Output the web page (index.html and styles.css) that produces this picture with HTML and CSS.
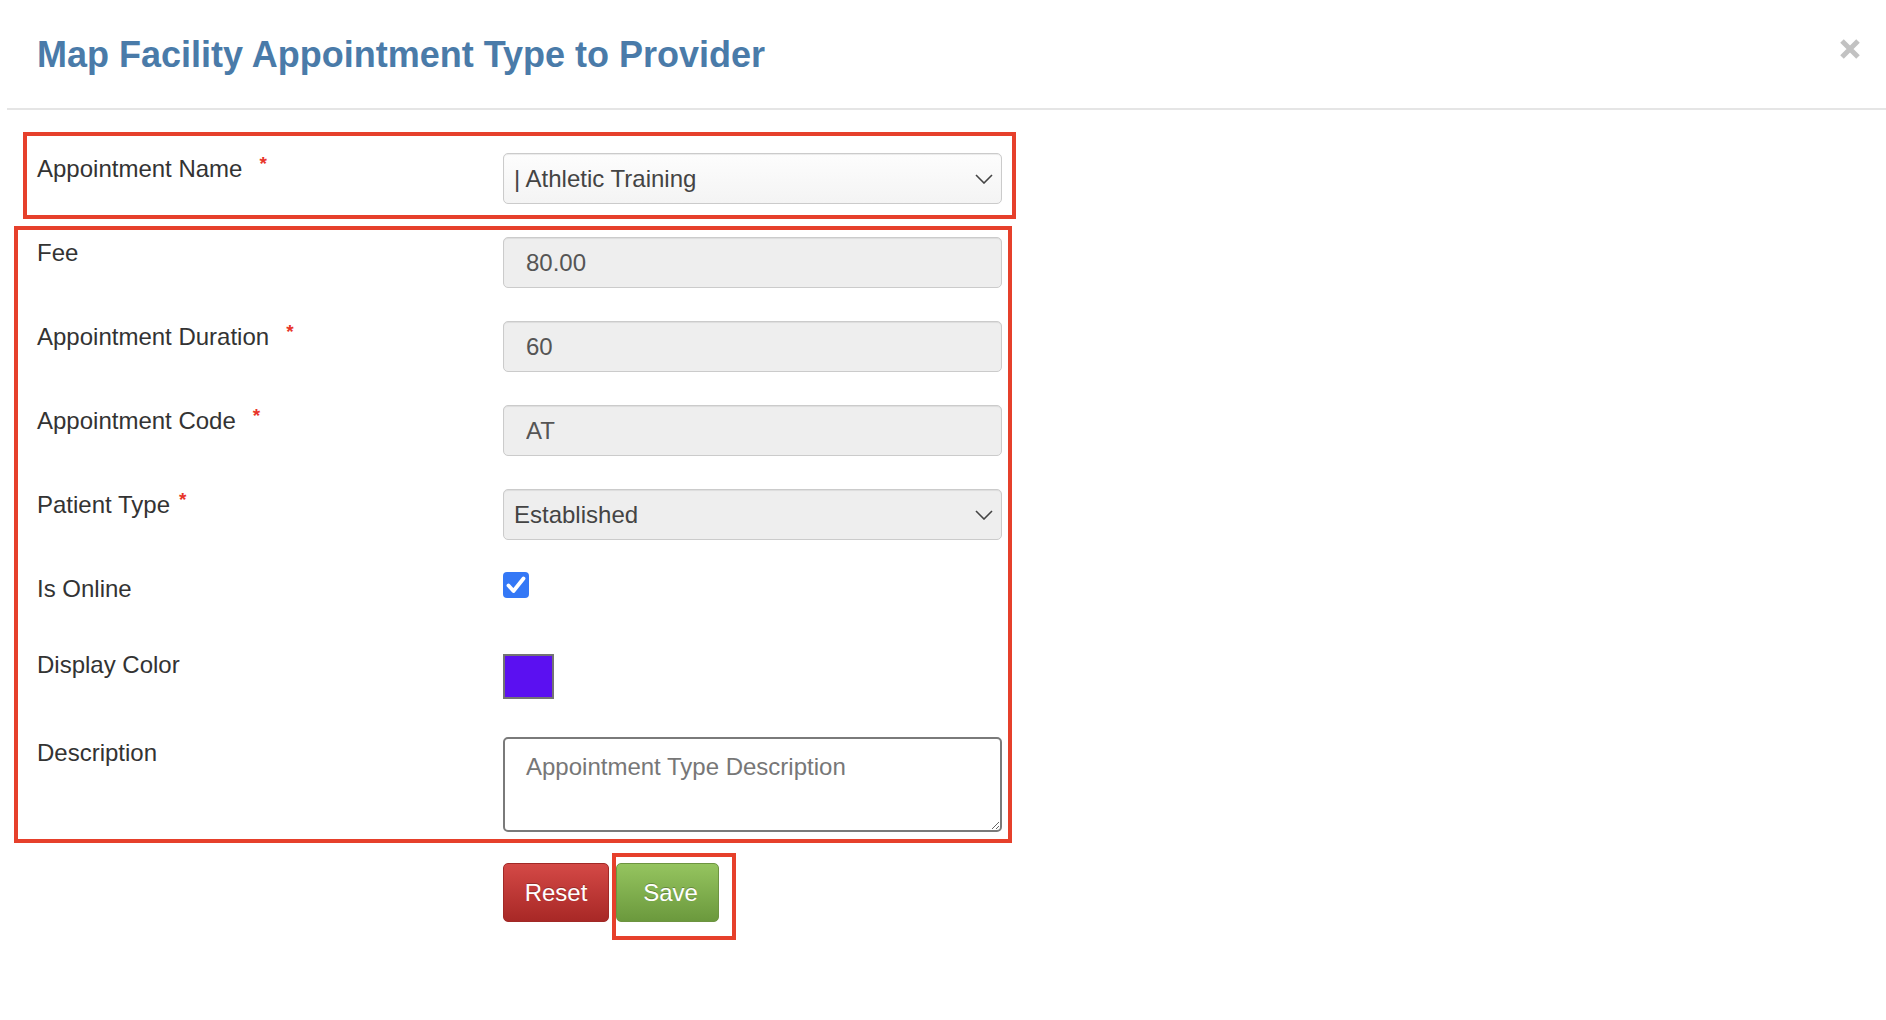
FILE: index.html
```html
<!DOCTYPE html>
<html lang="en">
<head>
<meta charset="utf-8">
<title>Map Facility Appointment Type to Provider</title>
<link rel="stylesheet" href="styles.css">
</head>
<body>
<div class="modal">
  <header class="modal-header">
    <h1 class="modal-title">Map Facility Appointment Type to Provider</h1>
    <button class="close" type="button" aria-label="Close">
      <svg width="22" height="22" viewBox="0 0 22 22"><path d="M3 3 L19 19 M19 3 L3 19" stroke="#c2c2c2" stroke-width="5" stroke-linecap="butt"/></svg>
    </button>
  </header>
  <form class="form">
    <div class="mark mark-name">
      <div class="row">
        <label class="label">Appointment Name<span class="req">*</span></label>
        <div class="control select select-light">
          <span>| Athletic Training</span>
          <svg class="chev" width="18" height="10" viewBox="0 0 18 10"><path d="M1 1 L9 9 L17 1" fill="none" stroke="#444" stroke-width="1.6"/></svg>
        </div>
      </div>
    </div>
    <div class="mark mark-fields">
      <div class="row">
        <label class="label">Fee</label>
        <input class="control input" type="text" value="80.00" readonly>
      </div>
      <div class="row">
        <label class="label">Appointment Duration<span class="req">*</span></label>
        <input class="control input" type="text" value="60" readonly>
      </div>
      <div class="row">
        <label class="label">Appointment Code<span class="req">*</span></label>
        <input class="control input" type="text" value="AT" readonly>
      </div>
      <div class="row">
        <label class="label">Patient Type<span class="req req-tight">*</span></label>
        <div class="control select">
          <span>Established</span>
          <svg class="chev" width="18" height="10" viewBox="0 0 18 10"><path d="M1 1 L9 9 L17 1" fill="none" stroke="#444" stroke-width="1.6"/></svg>
        </div>
      </div>
      <div class="row row-check">
        <label class="label">Is Online</label>
        <div class="check-cell">
          <span class="check"><svg width="26" height="26" viewBox="0 0 26 26"><path d="M5.5 13.5 L10.5 19 L20.5 6.5" fill="none" stroke="#fff" stroke-width="3.8" stroke-linecap="round" stroke-linejoin="round"/></svg></span>
        </div>
      </div>
      <div class="row row-color">
        <label class="label label-color">Display Color</label>
        <div><span class="swatch"></span></div>
      </div>
      <div class="row">
        <label class="label">Description</label>
        <textarea class="textarea" placeholder="Appointment Type Description"></textarea>
      </div>
    </div>
    <div class="actions">
      <button class="btn btn-reset" type="button">Reset</button>
      <div class="mark mark-save">
        <button class="btn btn-save" type="button">Save</button>
      </div>
    </div>
  </form>
</div>
</body>
</html>
```
FILE: styles.css
```css
* { box-sizing: border-box; }
html, body { margin: 0; background: #fff; }
body {
  font-family: "Liberation Sans", Arial, sans-serif;
  color: #333;
}

.modal-header {
  margin-left: 7px;
  height: 110px;
  border-bottom: 2px solid #e5e5e5;
  display: flex;
  justify-content: space-between;
  align-items: flex-start;
  padding: 0 25px 0 30px;
}
.modal-title {
  margin: 0;
  padding-top: 36px;
  font-size: 36px;
  line-height: 38px;
  font-weight: bold;
  color: #4a7ba9;
}
.close {
  margin-top: 38px;
  width: 22px;
  height: 22px;
  padding: 0;
  border: 0;
  background: none;
  display: block;
}
.close svg { display: block; }

.form { padding-top: 22px; }

.mark { border: 4px solid #e6402b; }
.mark-name {
  margin-left: 23px;
  width: 993px;
  padding: 17px 0 11px 10px;
}
.mark-fields {
  margin: 7px 0 0 14px;
  width: 998px;
  padding: 7px 0 7px 19px;
}

.row {
  display: grid;
  grid-template-columns: 466px 499px;
  margin-bottom: 33px;
}
.mark-name .row,
.row:last-child { margin-bottom: 0; }

.label {
  font-size: 24px;
  line-height: 28px;
  padding-top: 2px;
  color: #333;
}
.label-color { padding-top: 0; }
.req {
  color: #e8352a;
  font-size: 19px;
  font-weight: bold;
  vertical-align: top;
  line-height: 18px;
  margin-left: 17px;
}
.req-tight { margin-left: 9px; }

.control {
  width: 499px;
  height: 51px;
  border: 1px solid #cbcbcb;
  border-radius: 5px;
  background: #eee;
  font-family: "Liberation Sans", Arial, sans-serif;
  font-size: 24px;
  color: #555;
  box-shadow: inset 0 1px 1px rgba(0, 0, 0, 0.075);
}
.input {
  padding: 0 0 0 22px;
  outline: none;
}
.select {
  display: flex;
  align-items: center;
  justify-content: space-between;
  padding: 0 8px 0 10px;
  color: #444;
}
.select-light {
  background: linear-gradient(#fdfdfd, #f4f4f4);
}
.chev { display: block; }

.row-check { height: 45px; }
.check {
  display: block;
  width: 26px;
  height: 26px;
  border-radius: 4px;
  background: #3478f6;
  margin-top: -1px;
}
.check svg { display: block; }

.row-color { height: 53px; }
.swatch {
  display: block;
  width: 51px;
  height: 45px;
  margin-top: 3px;
  border: 2px solid #747474;
  background: #5b10f1;
}

.textarea {
  width: 499px;
  height: 95px;
  border: 2px solid #7a7a7a;
  border-radius: 5px;
  padding: 14px 21px;
  font-family: "Liberation Sans", Arial, sans-serif;
  font-size: 24px;
  line-height: 28px;
  color: #555;
  resize: vertical;
  outline: none;
}
.textarea::placeholder { color: #777; }

.actions {
  display: flex;
  align-items: flex-start;
  margin: 10px 0 0 503px;
}
.btn {
  height: 59px;
  border-radius: 5px;
  color: #fff;
  font-family: "Liberation Sans", Arial, sans-serif;
  font-size: 24px;
  text-shadow: 0 -1px 0 rgba(0, 0, 0, 0.25);
  padding: 0;
  cursor: pointer;
}
.btn-reset {
  margin-top: 10px;
  width: 106px;
  border: 1px solid #a12926;
  background: linear-gradient(#d44946, #a82826);
}
.mark-save {
  margin-left: 3px;
  padding: 6px 13px 14px 0;
}
.btn-save {
  display: block;
  width: 103px;
  padding-left: 6px;
  border: 1px solid #6d9441;
  background: linear-gradient(#95c45f, #6b993d);
}
```
